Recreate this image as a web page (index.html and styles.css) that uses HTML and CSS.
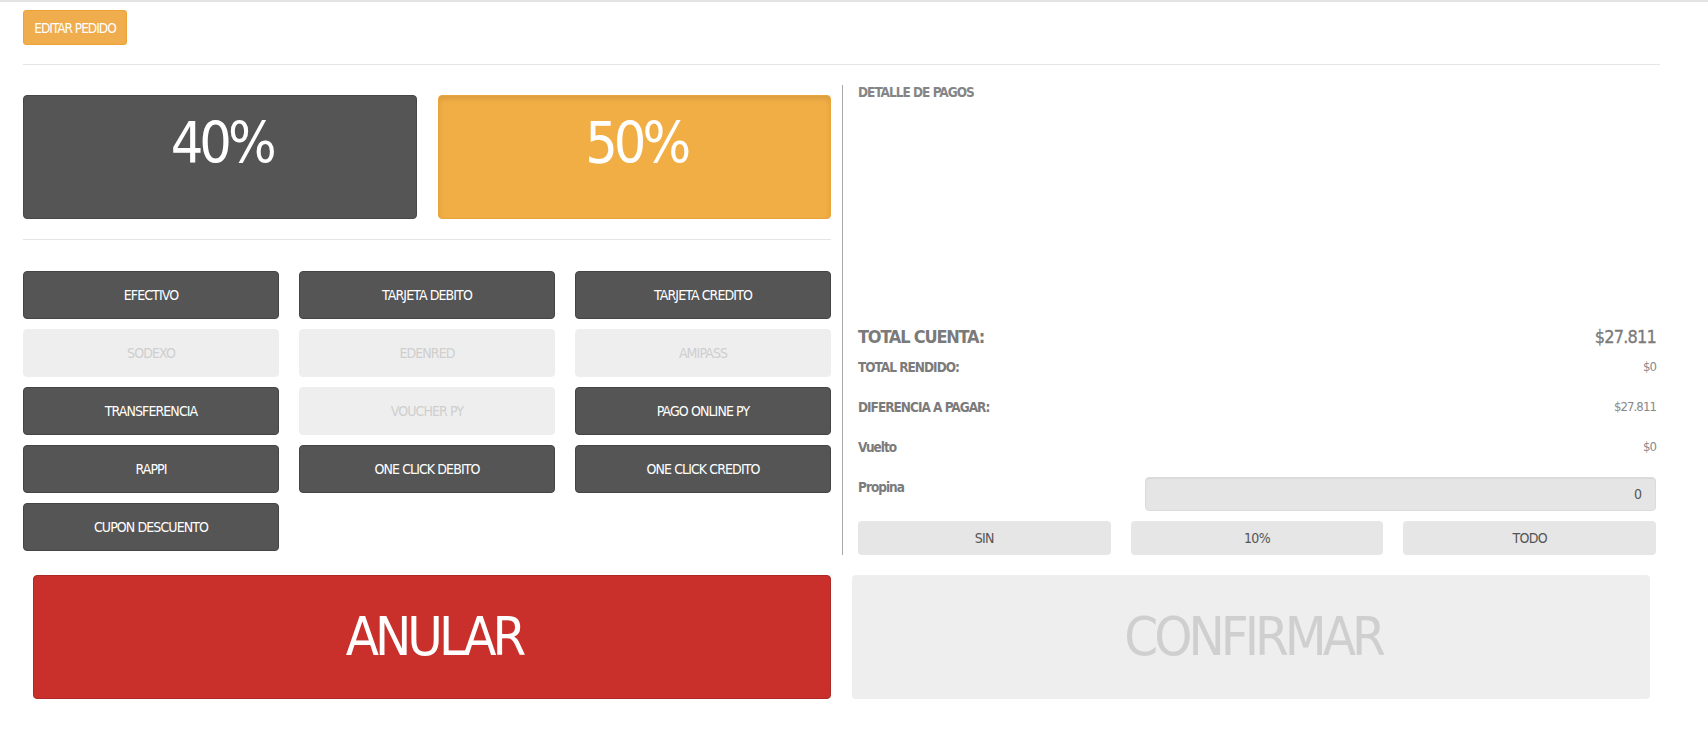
FILE: index.html
```html
<!DOCTYPE html>
<html lang="es">
<head>
<meta charset="utf-8">
<title>Pago</title>
<link rel="stylesheet" href="styles.css">
</head>
<body>
<div class="page">
  <div class="toolbar">
    <button class="btn-edit">EDITAR PEDIDO</button>
  </div>
  <hr class="sep sep-top">
  <div class="main">
    <section class="left">
      <div class="percents">
        <button class="pct pct-dark">40%</button>
        <button class="pct pct-active">50%</button>
      </div>
      <hr class="sep sep-mid">
      <div class="methods">
        <button class="method">EFECTIVO</button>
        <button class="method">TARJETA DEBITO</button>
        <button class="method">TARJETA CREDITO</button>
        <button class="method is-disabled">SODEXO</button>
        <button class="method is-disabled">EDENRED</button>
        <button class="method is-disabled">AMIPASS</button>
        <button class="method">TRANSFERENCIA</button>
        <button class="method is-disabled">VOUCHER PY</button>
        <button class="method">PAGO ONLINE PY</button>
        <button class="method">RAPPI</button>
        <button class="method">ONE CLICK DEBITO</button>
        <button class="method">ONE CLICK CREDITO</button>
        <button class="method">CUPON DESCUENTO</button>
      </div>
    </section>
    <section class="right">
      <div class="details-title">DETALLE DE PAGOS</div>
      <div class="details-body"></div>
      <div class="total-main"><span class="total-lbl">TOTAL CUENTA:</span><span class="total-val">$27.811</span></div>
      <div class="sum-row"><span class="lbl">TOTAL RENDIDO:</span><span class="val">$0</span></div>
      <div class="sum-row"><span class="lbl">DIFERENCIA A PAGAR:</span><span class="val">$27.811</span></div>
      <div class="sum-row"><span class="lbl">Vuelto</span><span class="val">$0</span></div>
      <div class="tip-row"><span class="lbl">Propina</span><div class="tip-input">0</div></div>
      <div class="tip-btns">
        <button class="tip-btn">SIN</button>
        <button class="tip-btn">10%</button>
        <button class="tip-btn">TODO</button>
      </div>
    </section>
  </div>
  <div class="actions">
    <button class="act act-cancel">ANULAR</button>
    <button class="act act-confirm">CONFIRMAR</button>
  </div>
</div>
</body>
</html>
```

FILE: styles.css
```css
* { box-sizing: border-box; }

html, body {
  margin: 0;
  padding: 0;
  background: #ffffff;
}

body {
  font-family: "DejaVu Sans Condensed", "DejaVu Sans", sans-serif;
  font-stretch: condensed;
  color: #555555;
}

button {
  font-family: inherit;
  font-stretch: condensed;
  margin: 0;
  padding: 0;
  border: 0;
  background: none;
  cursor: pointer;
}

.page {
  border-top: 2px solid #e3e3e3;
  padding: 8px 0 0 23px;
}

.toolbar {
  height: 35px;
  display: flex;
}

.btn-edit {
  width: 104px;
  height: 35px;
  background: #f0ad4e;
  border: 1px solid #eea236;
  border-radius: 3px;
  color: #ffffff;
  font-size: 13.5px;
  letter-spacing: -1px;
}

.sep {
  border: 0;
  height: 1px;
  background: #e6e6e6;
  margin: 0;
}

.sep-top {
  width: 1637px;
  margin-top: 19px;
}

.sep-mid {
  margin: 20px 0 31px;
}

.main {
  display: flex;
  margin-top: 20px;
}

.left {
  width: 808px;
  margin-right: 11px;
  padding-top: 10px;
}

.percents {
  display: grid;
  grid-template-columns: 1fr 1fr;
  column-gap: 21px;
}

.pct {
  height: 124px;
  border-radius: 4px;
  color: #ffffff;
  font-size: 57px;
  line-height: 1;
  letter-spacing: -4px;
  display: flex;
  justify-content: center;
  align-items: flex-start;
  padding: 19px 0 0 4px;
}

.pct-dark {
  background: #555555;
  border: 1px solid #474747;
}

.pct-active {
  background: #f1ae45;
  border: 1px solid #eaa53a;
  box-shadow: inset 0 3px 5px rgba(0, 0, 0, 0.1);
}

.methods {
  display: grid;
  grid-template-columns: repeat(3, 1fr);
  column-gap: 20px;
  row-gap: 10px;
}

.method {
  height: 48px;
  background: #555555;
  border: 1px solid #444444;
  border-radius: 4px;
  color: #ffffff;
  font-size: 14px;
  letter-spacing: -0.9px;
}

.method.is-disabled {
  background: #eeeeee;
  border-color: #eeeeee;
  color: #cfcfcf;
  cursor: default;
}

.right {
  width: 818px;
  border-left: 1px solid #a8a8a8;
  padding: 0 4px 0 15px;
  color: #7b7b7b;
}

.details-title {
  font-size: 13.5px;
  font-weight: bold;
  line-height: 14px;
  letter-spacing: -1px;
  color: #858585;
}

.details-body {
  height: 226px;
}

.total-main {
  display: flex;
  justify-content: space-between;
  font-size: 18px;
  line-height: 24px;
  color: #7a7a7a;
  margin-bottom: 8px;
}

.total-lbl {
  font-weight: bold;
  letter-spacing: -1.2px;
}

.total-val {
  letter-spacing: -0.8px;
  -webkit-text-stroke: 0.3px #7a7a7a;
}

.sum-row {
  display: flex;
  justify-content: space-between;
  height: 40px;
  font-size: 13.5px;
  line-height: 20px;
}

.lbl {
  font-weight: bold;
  letter-spacing: -1px;
  color: #7b7b7b;
}

.val {
  font-size: 13px;
  letter-spacing: -0.9px;
  color: #888888;
}

.tip-row {
  display: flex;
  align-items: flex-start;
  font-size: 13.5px;
  line-height: 20px;
}

.tip-row .lbl {
  width: 287px;
  flex: none;
}

.tip-input {
  flex: 1;
  height: 34px;
  background: #e5e5e5;
  border: 1px solid #dcdcdc;
  border-radius: 4px;
  box-shadow: inset 0 1px 1px rgba(0, 0, 0, 0.06);
  text-align: right;
  padding: 6px 13px 0 0;
  color: #555555;
  font-size: 14px;
}

.tip-btns {
  display: grid;
  grid-template-columns: repeat(3, 1fr);
  column-gap: 20px;
  margin-top: 10px;
}

.tip-btn {
  height: 34px;
  background: #e6e6e6;
  border-radius: 4px;
  color: #555555;
  font-size: 14px;
  letter-spacing: -0.7px;
}

.actions {
  display: flex;
  gap: 21px;
  margin: 20px 0 0 10px;
}

.act {
  width: 798px;
  height: 124px;
  border-radius: 4px;
  font-size: 54px;
  line-height: 1;
  letter-spacing: -4px;
  display: flex;
  justify-content: center;
  align-items: center;
  padding-left: 4px;
}

.act-cancel {
  background: #c9302c;
  border: 1px solid #ac2925;
  color: #ffffff;
}

.act-confirm {
  background: #eeeeee;
  color: #cfcfcf;
}
```
